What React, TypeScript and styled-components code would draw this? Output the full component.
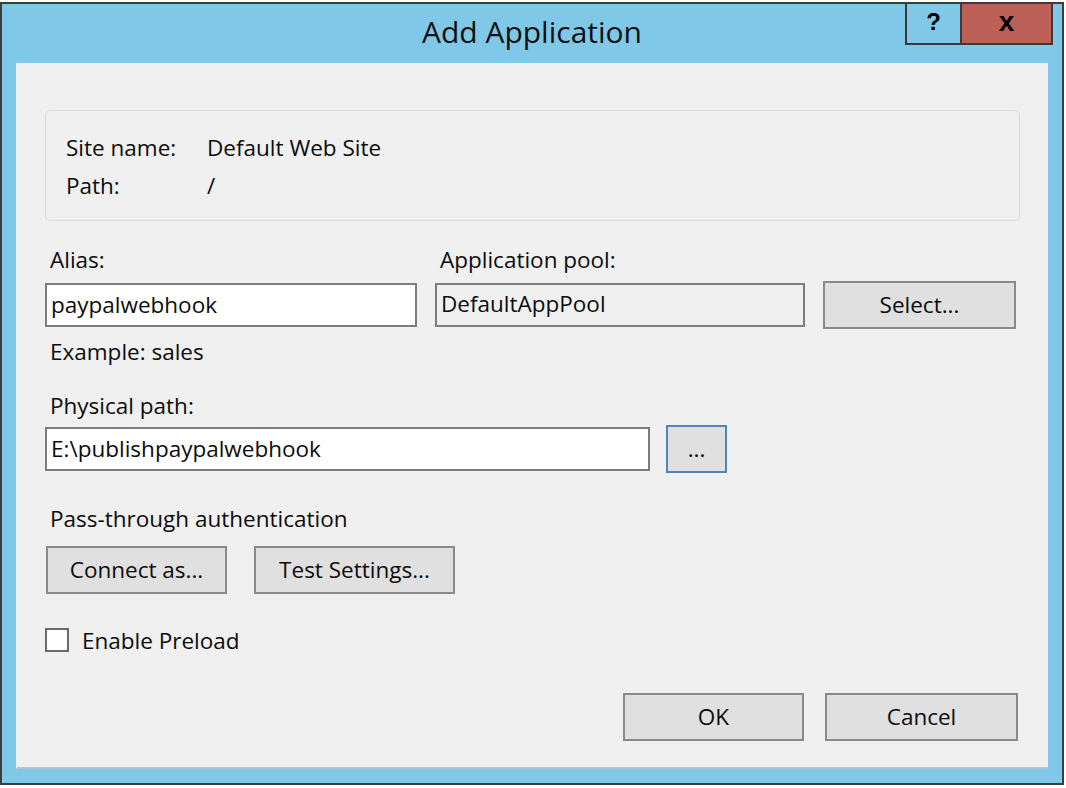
import React, { FC, ReactNode } from "react";
import styled, { createGlobalStyle } from "styled-components";

// Styles
const GlobalStyle = createGlobalStyle`
  body {
    margin: 0;
    background: #ffffff;
    font-family: "Open Sans", "Noto Sans", "Liberation Sans", sans-serif;
    color: #0c0c0c;
  }
`;

const StyledWindow = styled.div`
  box-sizing: border-box;
  width: 1064px;
  height: 783px;
  margin-top: 2px;
  border: 2px solid #3d3d3d;
  background: #7fc8e7;
  display: flex;
  flex-direction: column;
`;

const StyledTitleBar = styled.div`
  height: 59px;
  display: grid;
  grid-template-columns: 1fr auto 1fr;
`;

const StyledTitle = styled.div`
  grid-column: 2;
  align-self: center;
  font-size: 30px;
  line-height: 36px;
  color: #101010;
  margin-top: -3px;
`;

const StyledCaptionButtons = styled.div`
  grid-column: 3;
  justify-self: end;
  align-self: start;
  display: flex;
  margin-right: 9px;
  margin-top: -1px;
  border: 2px solid #3a3a3a;
  border-top-width: 1px;
  height: 39px;
`;

const StyledCaptionButton = styled.div<{ $close?: boolean }>`
  display: flex;
  align-items: center;
  justify-content: center;
  width: ${(p) => (p.$close ? "91px" : "53px")};
  background: ${(p) => (p.$close ? "#bc6057" : "#7fc8e7")};
  border-left: ${(p) => (p.$close ? "2px solid #3a3a3a" : "none")};
  font-family: "Liberation Sans", Arial, sans-serif;
  font-weight: bold;
  font-size: ${(p) => (p.$close ? "28px" : "24px")};
  color: #000000;
  padding-bottom: 4px;
  box-sizing: border-box;
`;

const StyledClient = styled.div`
  flex: 1;
  margin: 0 14px 14px 14px;
  background: #f0f0f0;
  border-left: 1px solid #e6f2f8;
  border-bottom: 2px solid #a9c7d6;
  padding: 47px 28px 0 28px;
  display: flex;
  flex-direction: column;
  font-size: 22.5px;
`;

const StyledGroupBox = styled.div`
  box-sizing: border-box;
  height: 111px;
  border: 1px solid #d9dde0;
  border-radius: 5px;
  padding: 17px 20px 0 20px;
  display: grid;
  grid-template-columns: 141px 1fr;
  grid-auto-rows: 38px;
  align-items: center;
`;

const StyledLabel = styled.div<{ $top: number; $indent?: number }>`
  line-height: 30px;
  height: 30px;
  margin-top: ${(p) => p.$top}px;
  padding-left: ${(p) => p.$indent ?? 5}px;
  white-space: nowrap;
`;

const StyledFieldGrid = styled.div`
  margin-top: 24px;
  display: grid;
  grid-template-columns: 372px 370px 193px;
  column-gap: 18px;
  row-gap: 6px;
  align-items: center;
`;

const StyledGridLabel = styled.div`
  line-height: 30px;
  padding-left: 5px;
  white-space: nowrap;
`;

const StyledInput = styled.div<{ $readOnly?: boolean; $width?: number }>`
  box-sizing: border-box;
  height: 44px;
  width: ${(p) => (p.$width ? `${p.$width}px` : "auto")};
  border: 2px solid #7d7d7d;
  background: ${(p) => (p.$readOnly ? "#f0f0f0" : "#ffffff")};
  padding: 0 4px;
  display: flex;
  align-items: center;
  padding-bottom: ${(p) => (p.$readOnly ? "4px" : "1px")};
  white-space: nowrap;
`;

const StyledButton = styled.div<{ $width?: number; $focused?: boolean }>`
  box-sizing: border-box;
  height: 48px;
  width: ${(p) => (p.$width ? `${p.$width}px` : "auto")};
  border: 2px solid ${(p) => (p.$focused ? "#4f86b7" : "#8a8a8a")};
  background: #e0e0e0;
  display: flex;
  align-items: center;
  justify-content: center;
  padding-bottom: 2px;
  white-space: nowrap;
`;

const StyledPathRow = styled.div`
  margin-top: 4px;
  display: flex;
  align-items: center;
  gap: 16px;
`;

const StyledButtonRow = styled.div<{ $top: number; $end?: boolean }>`
  margin-top: ${(p) => p.$top}px;
  display: flex;
  gap: ${(p) => (p.$end ? "21px" : "27px")};
  justify-content: ${(p) => (p.$end ? "flex-end" : "flex-start")};
  padding-right: ${(p) => (p.$end ? "2px" : "0")};
  padding-left: ${(p) => (p.$end ? "0" : "1px")};
`;

const StyledCheckRow = styled.div`
  margin-top: 31px;
  height: 30px;
  display: flex;
  align-items: center;
  gap: 13px;
`;

const StyledCheckbox = styled.span`
  box-sizing: border-box;
  width: 24px;
  height: 24px;
  border: 2px solid #6a6a6a;
  background: #ffffff;
`;

// Props
interface IGroupRowProps {
  label: string;
  children?: ReactNode;
}

const GroupRow: FC<IGroupRowProps> = ({ label, children = undefined }) => {
  return (
    <>
      <span>{label}</span>
      <span>{children}</span>
    </>
  );
};

const App: FC = () => {
  return (
    <>
      <GlobalStyle />
      <StyledWindow>
        <StyledTitleBar>
          <StyledTitle>Add Application</StyledTitle>
          <StyledCaptionButtons>
            <StyledCaptionButton>?</StyledCaptionButton>
            <StyledCaptionButton $close>x</StyledCaptionButton>
          </StyledCaptionButtons>
        </StyledTitleBar>
        <StyledClient>
          <StyledGroupBox>
            <GroupRow label="Site name:">Default Web Site</GroupRow>
            <GroupRow label="Path:">/</GroupRow>
          </StyledGroupBox>

          <StyledFieldGrid>
            <StyledGridLabel>Alias:</StyledGridLabel>
            <StyledGridLabel>Application pool:</StyledGridLabel>
            <span />
            <StyledInput>paypalwebhook</StyledInput>
            <StyledInput $readOnly>DefaultAppPool</StyledInput>
            <StyledButton>Select...</StyledButton>
          </StyledFieldGrid>

          <StyledLabel $top={8}>Example: sales</StyledLabel>
          <StyledLabel $top={24}>Physical path:</StyledLabel>
          <StyledPathRow>
            <StyledInput $width={605}>E:\publishpaypalwebhook</StyledInput>
            <StyledButton $width={61} $focused>
              ...
            </StyledButton>
          </StyledPathRow>

          <StyledLabel $top={31}>Pass-through authentication</StyledLabel>
          <StyledButtonRow $top={12}>
            <StyledButton $width={181}>Connect as...</StyledButton>
            <StyledButton $width={201}>Test Settings...</StyledButton>
          </StyledButtonRow>

          <StyledCheckRow>
            <StyledCheckbox />
            <span>Enable Preload</span>
          </StyledCheckRow>

          <StyledButtonRow $top={38} $end>
            <StyledButton $width={181}>OK</StyledButton>
            <StyledButton $width={193}>Cancel</StyledButton>
          </StyledButtonRow>
        </StyledClient>
      </StyledWindow>
    </>
  );
};

export default App;
